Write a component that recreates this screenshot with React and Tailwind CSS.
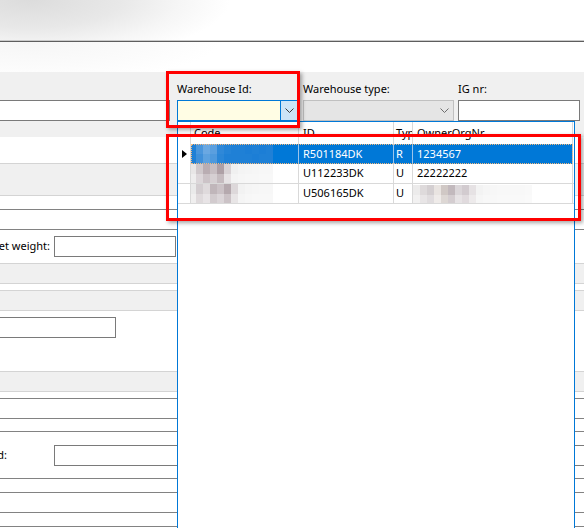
import React from "react";

const L = () => <div className="h-px bg-[#d4d4d4]" />;
const D = () => <div className="h-px bg-[#828282]" />;

const Chevron = ({ color }) => (
  <svg width="9" height="5" viewBox="0 0 9 5">
    <path d="M0.5 0.5 L4.5 4.5 L8.5 0.5" fill="none" stroke={color} strokeWidth="1" />
  </svg>
);

const Mosaic = ({ rows, w = 7, h = 10 }) => (
  <div className="flex flex-col">
    {rows.map((r, i) => (
      <div key={i} className="flex">
        {r.map((c, j) => (
          <div key={j} style={{ width: w, height: h, background: c }} />
        ))}
      </div>
    ))}
  </div>
);

const blueMosaic = [
  ["#1f80d6", "#4a96dc", "#6aa8e2", "#5a9fdf", "#2f88d8", "#2483d7", "#1f80d6", "#1f80d6", "#1c7ed6", "#1f80d6", "#1c7ed6", "#1f80d6"],
  ["#1f80d6", "#3f90da", "#5ca1df", "#4e99dd", "#2a86d7", "#1f80d6", "#1f80d6", "#1f80d6", "#1f80d6", "#1c7ed6", "#1f80d6", "#1f80d6"],
];
const grayMosaic1 = [
  ["#e8e6e6", "#cfc8cb", "#b9adb2", "#c8bec2", "#ae a0a6".replace(" ", ""), "#d8d2d5", "#f0f0f0", "#f4f4f4", "#f5f5f5", "#f6f6f6", "#f7f7f7", "#f7f7f7"],
  ["#eeeded", "#dcd6d9", "#ccc3c7", "#d6cfd2", "#c5bbbf", "#e6e2e4", "#f4f4f4", "#f6f6f6", "#f7f7f7", "#f7f7f7", "#f8f8f8", "#f8f8f8"],
];
const grayMosaic2 = [
  ["#eaeaea", "#d3cdd0", "#dfdadc", "#c0b6ba", "#cbc2c6", "#b5a9ae", "#ddd8da", "#f2f2f2", "#f5f5f5", "#f6f6f6", "#f7f7f7", "#f7f7f7"],
  ["#f0efef", "#dfdadc", "#e8e4e6", "#d2cbce", "#dbd5d8", "#cbc2c6", "#e8e5e6", "#f5f5f5", "#f7f7f7", "#f8f8f8", "#f8f8f8", "#f8f8f8"],
];
const grayMosaic3 = [
  ["#ecebeb", "#dedadb", "#d4cfd1", "#e9e4e1", "#d0c8c5", "#c2b9bd", "#dbd6d9", "#d2cbcf", "#e6e2e4", "#f3f3f3", "#f6f6f6", "#f7f7f7", "#f8f8f8", "#f8f8f8", "#f8f8f8", "#f8f8f8", "#f9f9f9"],
  ["#f2f1f1", "#e8e5e6", "#e0dcde", "#efebe9", "#ddd7d4", "#d4cdd0", "#e7e3e5", "#e0dadd", "#edeaeb", "#f6f6f6", "#f8f8f8", "#f8f8f8", "#f9f9f9", "#f9f9f9", "#f9f9f9", "#f9f9f9", "#fafafa"],
];

const Cell = ({ w, children, sel, className = "" }) => (
  <div
    className={`h-full flex items-center border-r overflow-hidden whitespace-nowrap ${sel ? "border-[#9cc4ea]" : "border-[#d9d9d9]"} ${w} ${className}`}
  >
    {children}
  </div>
);

export default function App() {
  return (
    <div className="relative w-[584px] h-[528px] overflow-hidden bg-white font-['Segoe_UI','Noto_Sans',sans-serif] text-[11px] text-black">
      {/* top area */}
      <div className="h-[40px] bg-[radial-gradient(ellipse_200px_62px_at_30px_0px,#dcdcdc_0%,#e8e8e8_45%,#f6f6f6_75%,#ffffff_100%)]" />
      <div className="h-px bg-[#cacaca]" />
      <div className="h-px bg-[#5e5e5e]" />
      <div className="h-[30px] bg-[radial-gradient(ellipse_190px_40px_at_30px_0px,#f6f6f6_0%,#fbfbfb_60%,#ffffff_100%)]" />

      {/* label band */}
      <div className="bg-[#f0f0f0] pt-[10px] pb-[16px] flex">
        <div className="w-[170px] flex flex-col">
          <div className="h-[18px]" />
          <div className="h-[21px] bg-white border border-l-0 border-[#7a7a7a]" />
        </div>
        <div className="ml-[7px] w-[121px] flex flex-col">
          <div className="h-[18px] leading-[14px] whitespace-nowrap">Warehouse Id:</div>
          <div className="h-[21px] border border-[#0078d7] bg-[#fffde4] flex justify-end">
            <div className="w-[17px] h-full bg-[#cce4f7] border-l border-[#0078d7] flex items-center justify-center">
              <Chevron color="#3a3a3a" />
            </div>
          </div>
        </div>
        <div className="ml-[5px] w-[151px] flex flex-col">
          <div className="h-[18px] leading-[14px] whitespace-nowrap">Warehouse type:</div>
          <div className="h-[21px] border border-[#c0c0c0] bg-[#e5e5e5] flex justify-end items-center pr-[4px]">
            <Chevron color="#6d6d6d" />
          </div>
        </div>
        <div className="ml-[4px] w-[122px] flex flex-col">
          <div className="h-[18px] leading-[14px] whitespace-nowrap">IG nr:</div>
          <div className="h-[21px] border border-[#7a7a7a] bg-white" />
        </div>
      </div>

      {/* form rows */}
      <div className="h-[26px]" />
      <L />
      <div className="h-[31px] bg-[#f0f0f0]" />
      <L />
      <div className="h-[13px]" />
      <D />
      <div className="h-[19px]" />
      <D />
      <div className="h-[33px] pt-[6px] flex items-start">
        <div className="w-[50px] h-[21px] flex justify-end items-center">
          <span className="whitespace-nowrap">Net weight:</span>
        </div>
        <div className="ml-[4px] w-[122px] h-[21px] border border-[#7a7a7a] bg-white" />
      </div>
      <L />
      <div className="h-[19px] bg-[#f0f0f0]" />
      <L />
      <div className="h-[6px]" />
      <L />
      <div className="h-[19px] bg-[#f0f0f0]" />
      <L />
      <div className="h-[60px] pt-[6px]">
        <div className="w-[116px] h-[21px] border border-l-0 border-[#7a7a7a] bg-white" />
      </div>
      <L />
      <div className="h-[19px] bg-[#f0f0f0]" />
      <L />
      <div className="h-[6px]" />
      <D />
      <div className="h-[19px]" />
      <D />
      <div className="h-[12px]" />
      <D />
      <div className="h-[46px] pt-[13px] flex items-start">
        <div className="w-[7px] h-[21px] flex justify-end items-center">
          <span className="whitespace-nowrap">Received:</span>
        </div>
        <div className="ml-[47px] w-[560px] shrink-0 h-[21px] border border-r-0 border-[#7a7a7a] bg-white" />
      </div>
      <D />
      <div className="h-[13px]" />
      <D />
      <div className="h-[19px]" />
      <D />
      <div className="h-[13px]" />
      <D />

      {/* dropdown popup */}
      <div className="absolute left-[177px] top-[121px] w-[398px] bottom-[-2px] border border-[#0078d7] bg-white">
        {/* header */}
        <div className="flex h-[22px]">
          <Cell w="w-[13px]" />
          <Cell w="w-[108px]" className="pl-[3px]">Code</Cell>
          <Cell w="w-[95px]" className="pl-[4px]">ID</Cell>
          <Cell w="w-[19px]" className="pl-[2px]">Type</Cell>
          <Cell w="w-[160px]" className="pl-[4px]">OwnerOrgNr</Cell>
        </div>
        {/* row 1 selected */}
        <div className="flex h-[20px]">
          <div className="w-[13px] h-full border-r border-[#d9d9d9] flex items-center justify-center">
            <svg width="5" height="8" viewBox="0 0 5 8">
              <polygon points="0,0 5,4 0,8" fill="#000" />
            </svg>
          </div>
          <div className="flex h-full bg-[#0078d7] text-white outline-1 outline-dotted outline-[#f2b87c] -outline-offset-1">
            <Cell w="w-[108px]" sel className="items-start">
              <div className="-ml-[2px]">
                <Mosaic rows={blueMosaic} />
              </div>
            </Cell>
            <Cell w="w-[95px]" sel className="pl-[4px]">R501184DK</Cell>
            <Cell w="w-[19px]" sel className="pl-[2px]">R</Cell>
            <Cell w="w-[160px]" sel className="pl-[4px]">1234567</Cell>
          </div>
        </div>
        {/* row 2 */}
        <div className="flex h-[20px] border-b border-[#d9d9d9]">
          <Cell w="w-[13px]" />
          <Cell w="w-[108px]" className="items-start">
            <div className="-ml-[2px]">
              <Mosaic rows={grayMosaic1} />
            </div>
          </Cell>
          <Cell w="w-[95px]" className="pl-[4px]">U112233DK</Cell>
          <Cell w="w-[19px]" className="pl-[2px]">U</Cell>
          <Cell w="w-[160px]" className="pl-[4px]">22222222</Cell>
        </div>
        {/* row 3 */}
        <div className="flex h-[20px] border-b border-[#d9d9d9]">
          <Cell w="w-[13px]" />
          <Cell w="w-[108px]" className="items-start">
            <div className="-ml-[2px]">
              <Mosaic rows={grayMosaic2} />
            </div>
          </Cell>
          <Cell w="w-[95px]" className="pl-[4px]">U506165DK</Cell>
          <Cell w="w-[19px]" className="pl-[2px]">U</Cell>
          <Cell w="w-[160px]" className="items-start">
            <div className="mt-[1px]">
              <Mosaic rows={grayMosaic3} />
            </div>
          </Cell>
        </div>
      </div>

      {/* annotation rectangles */}
      <div className="absolute left-[166px] top-[71px] w-[134px] h-[57px] border-[3px] border-[#f00] shadow-[2px_2px_4px_rgba(0,0,0,0.35)]" />
      <div className="absolute left-[166px] top-[134px] w-[415px] h-[87px] border-[3px] border-[#f00] shadow-[2px_2px_4px_rgba(0,0,0,0.35)]" />
    </div>
  );
}
